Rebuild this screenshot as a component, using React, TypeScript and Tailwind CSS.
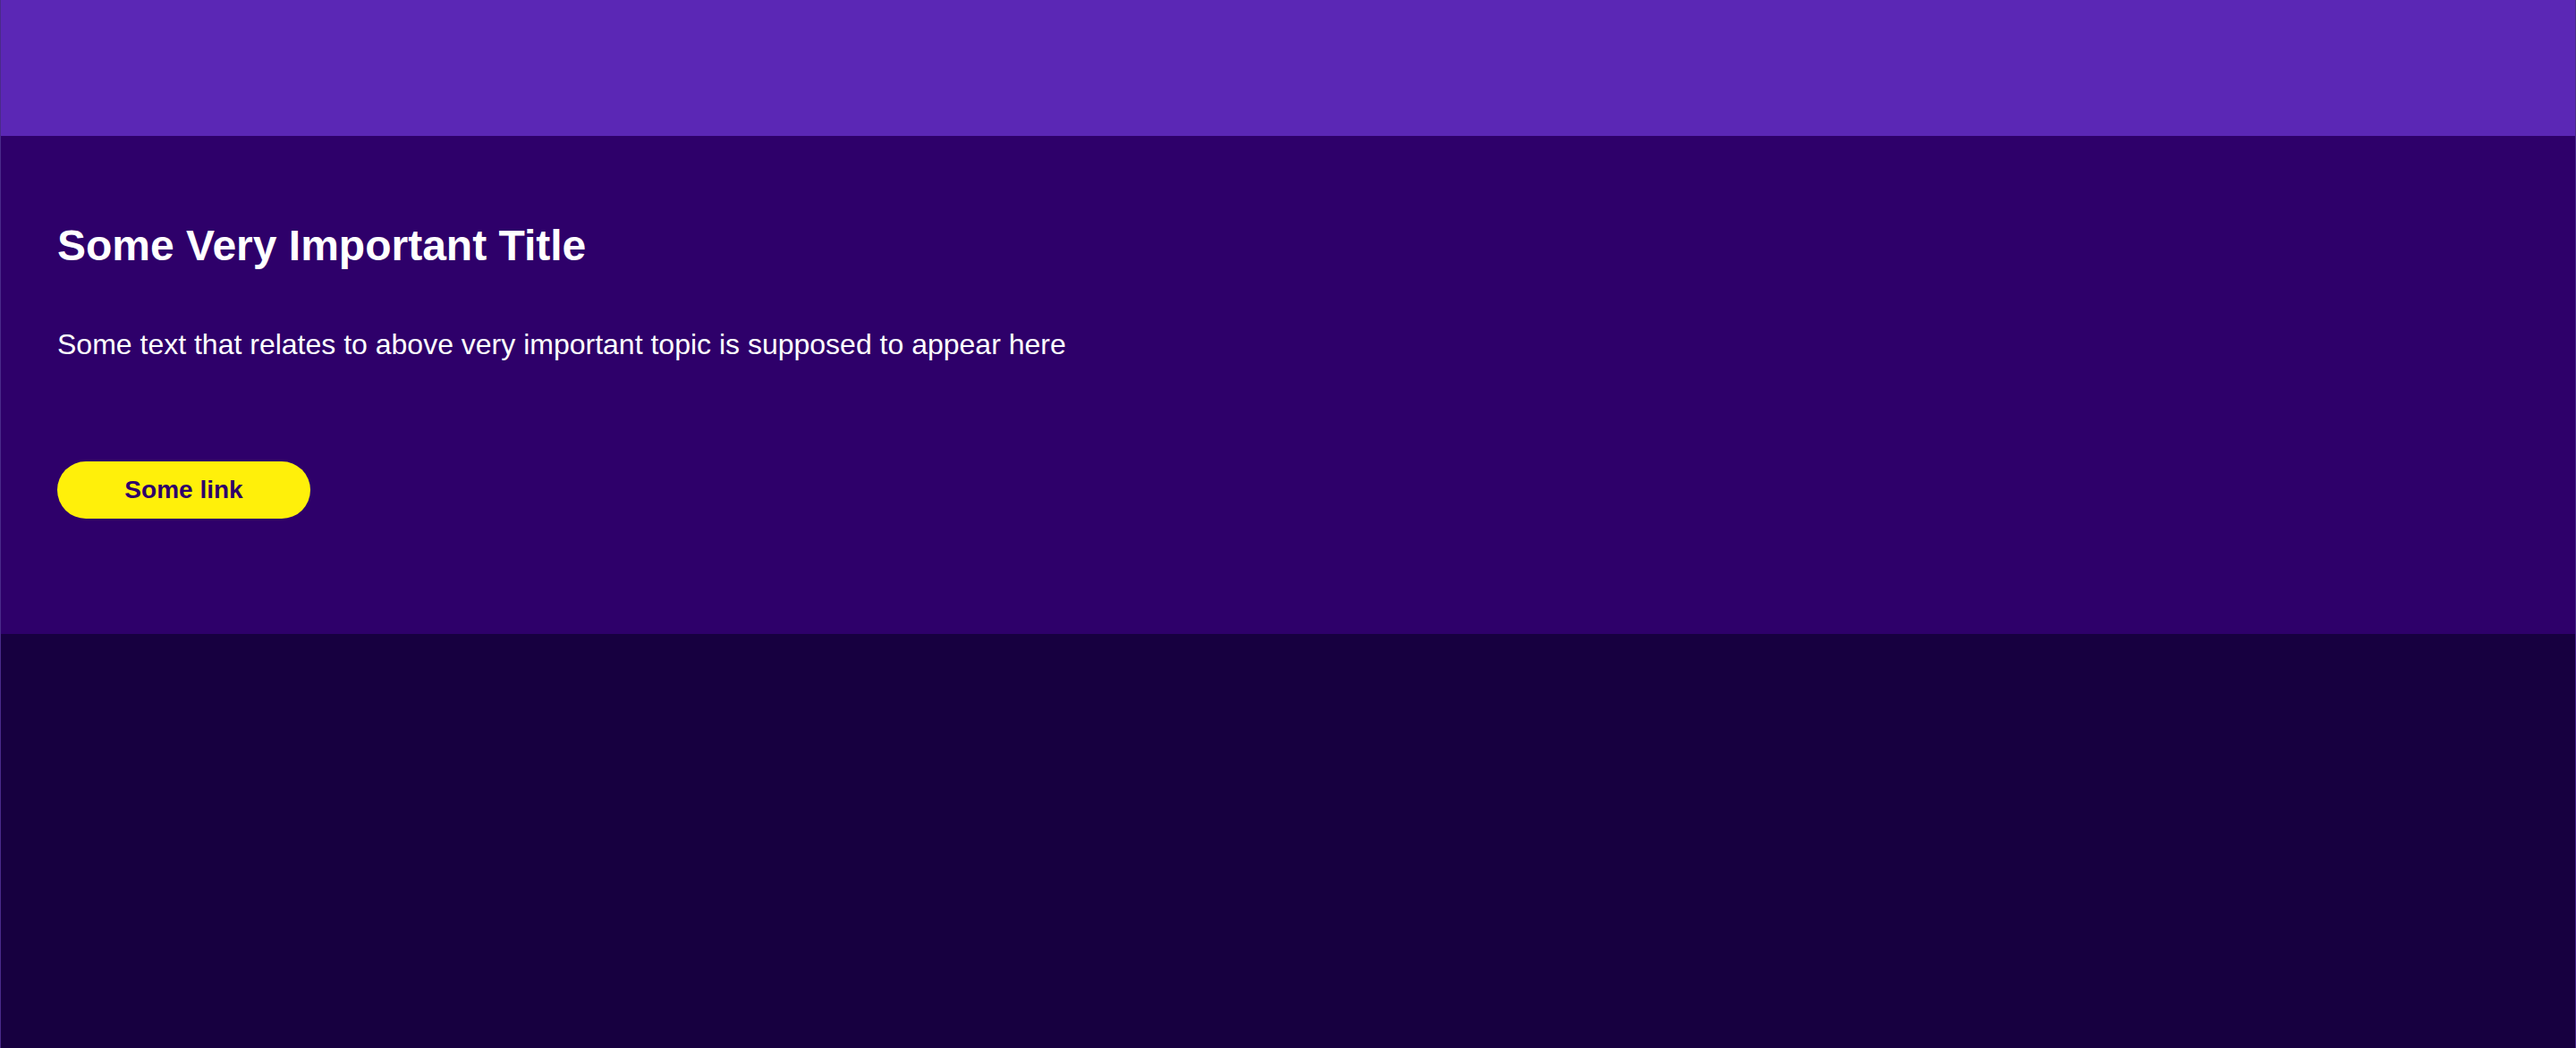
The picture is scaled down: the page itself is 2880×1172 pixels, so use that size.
export default function App() {
  return (
    <div className="flex min-h-screen flex-col border-x border-x-[#4a2a8a] bg-[#170040] font-['Liberation_Sans',Arial,sans-serif]">
      <header className="h-[152px] bg-[#5b27b5]" />

      <section className="bg-[#2e006a] px-[63px] pt-[95px] pb-[129px] text-white">
        <h1 className="text-[48px] leading-[55px] font-bold">
          Some Very Important Title
        </h1>
        <p className="mt-[65px] text-[32px] leading-[37px]">
          Some text that relates to above very important topic is supposed to
          appear here
        </p>
        <a
          href="#"
          className="mt-[112px] flex h-[64px] w-[283px] items-center justify-center rounded-full bg-[#fff00a] text-[28px] font-bold text-[#2e006a]"
        >
          Some link
        </a>
      </section>

      <main className="flex-1 bg-[#170040]" />
    </div>
  );
}
